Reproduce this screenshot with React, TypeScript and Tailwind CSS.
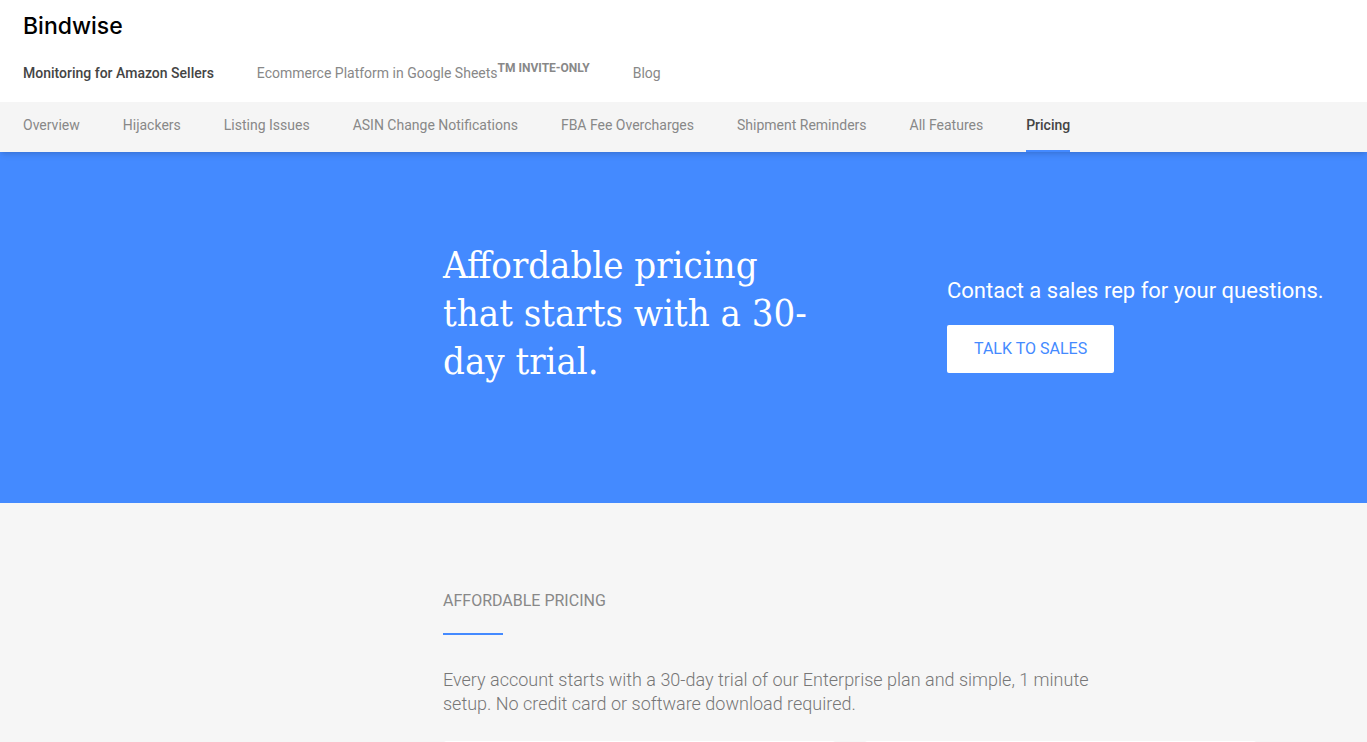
import { clsx } from 'clsx';

const products = [
  { label: 'Monitoring for Amazon Sellers', active: true },
  { label: 'Ecommerce Platform in Google Sheets', note: 'TM INVITE-ONLY' },
  { label: 'Blog' },
];

const sections = [
  'Overview',
  'Hijackers',
  'Listing Issues',
  'ASIN Change Notifications',
  'FBA Fee Overcharges',
  'Shipment Reminders',
  'All Features',
  'Pricing',
];

function Header() {
  return (
    <header className="relative z-10 shadow-md">
      <div className="bg-white px-[23px] pt-3">
        <a href="#" className="block font-['Inter',sans-serif] text-[23px] leading-7 font-medium text-black">
          Bindwise
        </a>
        <nav className="flex h-[62px] items-center gap-[43px] pt-1">
          {products.map((item) => (
            <a
              key={item.label}
              href="#"
              className={clsx('whitespace-nowrap', item.active ? 'font-medium text-[#444]' : 'text-[#888]')}
            >
              {item.label}
              {item.note && <sup className="text-xs font-bold">{item.note}</sup>}
            </a>
          ))}
        </nav>
      </div>
      <nav className="flex h-[50px] gap-[43px] bg-[#f5f5f5] px-[23px]">
        {sections.map((label) => (
          <a
            key={label}
            href="#"
            className={clsx(
              'flex items-center border-b-2 pb-0.5 whitespace-nowrap',
              label === 'Pricing' ? 'border-[#448aff] font-medium text-[#444]' : 'border-transparent text-[#888]'
            )}
          >
            {label}
          </a>
        ))}
      </nav>
    </header>
  );
}

function Hero() {
  return (
    <section className="flex items-start gap-28 bg-[#448aff] pt-[89px] pb-[118px] pr-10 pl-[443px] text-white">
      <h1 className="w-[392px] shrink-0 font-['Roboto_Slab','DejaVu_Serif_Condensed','DejaVu_Serif',serif] text-[38px] leading-[48px] font-light">
        Affordable pricing that starts with a 30-day trial.
      </h1>
      <div className="pt-8">
        <p className="text-[22px] leading-9 whitespace-nowrap">Contact a sales rep for your questions.</p>
        <button type="button" className="mt-4 h-12 rounded-xs bg-white px-[27px] text-base text-[#448aff]">
          TALK TO SALES
        </button>
      </div>
    </section>
  );
}

function Pricing() {
  return (
    <section className="pt-[86px] pr-[110px] pl-[443px]">
      <h2 className="text-base leading-6 text-[#888]">AFFORDABLE PRICING</h2>
      <div className="mt-5 h-0.5 w-15 bg-[#448aff]" />
      <p className="mt-[33px] max-w-[660px] text-lg leading-6 font-light text-[#777]">
        Every account starts with a 30-day trial of our Enterprise plan and simple, 1 minute setup. No credit card or
        software download required.
      </p>
      <div className="mt-[25px] grid grid-cols-2 gap-7">
        <div className="h-12 rounded-sm bg-white" />
        <div className="h-12 rounded-sm bg-white" />
      </div>
    </section>
  );
}

export default function App() {
  return (
    <div className="h-screen overflow-hidden bg-[#f6f6f6] font-['Roboto',sans-serif] text-sm">
      <Header />
      <main>
        <Hero />
        <Pricing />
      </main>
    </div>
  );
}
